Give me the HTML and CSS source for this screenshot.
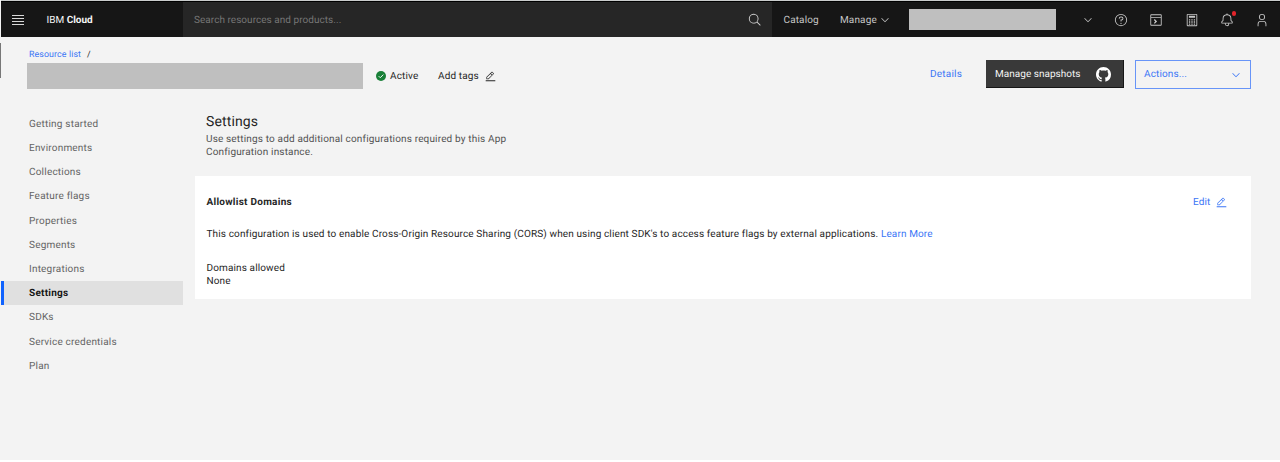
FILE: index.html
```html
<!DOCTYPE html>
<html lang="en">
<head>
<meta charset="utf-8">
<title>Settings - IBM Cloud</title>
<link rel="stylesheet" href="styles.css">
</head>
<body>
<svg class="defs" width="0" height="0">
  <symbol id="chevron" viewBox="0 0 16 16"><path d="M8 11L3 6 3.7 5.3 8 9.6 12.3 5.3 13 6z"/></symbol>
  <symbol id="edit" viewBox="0 0 32 32"><path d="M2 27H30V30H2zM25.4 9c.8-.8.8-2 0-2.8l-3.6-3.6c-.8-.8-2-.8-2.8 0l-15 15V24h6.4L25.4 9zM20.4 4L24 7.6l-3 3L17.4 7 20.4 4zM6 22v-3.6l10-10 3.6 3.6-10 10H6z"/></symbol>
</svg>
<header class="header">
  <div class="brand">
    <span class="burger"><i></i><i></i><i></i><i></i></span>
    <span class="brand-name">IBM <b>Cloud</b></span>
  </div>
  <div class="search">
    <span class="search-text">Search resources and products...</span>
    <svg class="search-icon" viewBox="0 0 32 32"><path d="M29,27.5859l-7.5521-7.5521a11.0177,11.0177,0,1,0-1.4141,1.4141L27.5859,29ZM4,13a9,9,0,1,1,9,9A9.01,9.01,0,0,1,4,13Z"/></svg>
  </div>
  <span class="catalog">Catalog</span>
  <span class="manage">Manage</span>
  <svg class="chev"><use href="#chevron"/></svg>
  <span class="account"></span>
  <div class="tools">
    <svg class="chev"><use href="#chevron"/></svg>
    <svg class="tool" viewBox="0 0 32 32"><path d="M16,2A14,14,0,1,0,30,16,14,14,0,0,0,16,2Zm0,26A12,12,0,1,1,28,16,12,12,0,0,1,16,28Z"/><circle cx="16" cy="23.5" r="1.5"/><path d="M17,8H15.5A4.49,4.49,0,0,0,11,12.5V13h2v-.5A2.5,2.5,0,0,1,15.5,10H17a2.5,2.5,0,0,1,0,5H15v4.5h2V17a4.5,4.5,0,0,0,0-9Z"/></svg>
    <svg class="tool" viewBox="0 0 32 32"><path d="M27 3H5a2 2 0 0 0-2 2v22a2 2 0 0 0 2 2h22a2 2 0 0 0 2-2V5a2 2 0 0 0-2-2zm0 2v4H5V5zM5 27V11h22v16z"/><path d="M11.200 22.600l3-3.400-3-3.400 2-2 5.300 5.400-5.300 5.400z"/></svg>
    <svg class="tool" viewBox="0 0 32 32"><path d="M26 4v24H6V4h20m0-2H6a2 2 0 0 0-2 2v24a2 2 0 0 0 2 2h20a2 2 0 0 0 2-2V4a2 2 0 0 0-2-2z"/><path d="M9 6h14v5H9zM9 14h3v3H9zM14.500 14h3v3h-3zM20 14h3v3h-3zM9 19h3v3H9zM14.500 19h3v3h-3zM20 19h3v3h-3zM9 24h3v3H9zM14.500 24h3v3h-3zM20 24h3v3h-3z"/></svg>
    <span class="bell"><svg class="tool" viewBox="0 0 32 32"><path d="M28.7071,19.293,26,16.5859V13a10.0136,10.0136,0,0,0-9-9.9492V1H15V3.0508A10.0136,10.0136,0,0,0,6,13v3.5859L3.2929,19.293A1,1,0,0,0,3,20v3a1,1,0,0,0,1,1h7v.7768a5.152,5.152,0,0,0,4.5,5.1987A5.0057,5.0057,0,0,0,21,25V24h7a1,1,0,0,0,1-1V20A1,1,0,0,0,28.7071,19.293ZM19,25a3,3,0,0,1-6,0V24h6Zm8-3H5V20.4141L7.707,17.707A1,1,0,0,0,8,17V13a8,8,0,0,1,16,0v4a1,1,0,0,0,.293.707L27,20.4141Z"/></svg><i class="dot"></i></span>
    <svg class="tool" viewBox="0 0 32 32"><path d="M16 4a5 5 0 1 1-5 5 5 5 0 0 1 5-5m0-2a7 7 0 1 0 7 7A7 7 0 0 0 16 2zM26 30H24V25a5 5 0 0 0-5-5H13a5 5 0 0 0-5 5v5H6V25a7 7 0 0 1 7-7h6a7 7 0 0 1 7 7z"/></svg>
  </div>
</header>
<section class="titlebar">
  <div class="title-left">
    <div class="crumbs"><a>Resource list</a><span>/</span></div>
    <div class="title-row">
      <span class="name"></span>
      <svg class="check" viewBox="0 0 16 16"><circle cx="8" cy="8" r="8" fill="#198038"/><path d="M4.300 8.200l2.500 2.500 4.900-4.900" fill="none" stroke="#fff" stroke-width="1.500"/></svg>
      <span class="active-label">Active</span>
      <span class="tags-label">Add tags</span>
      <svg class="edit"><use href="#edit"/></svg>
    </div>
  </div>
  <div class="title-right">
    <a class="details">Details</a>
    <div class="snapshots"><span>Manage snapshots</span>
      <svg class="github" viewBox="0 0 16 16"><path d="M8 0C3.580 0 0 3.580 0 8c0 3.540 2.290 6.530 5.470 7.590.4.070.55-.17.55-.38 0-.19-.01-.82-.01-1.490-2.010.37-2.530-.49-2.690-.94-.09-.23-.48-.94-.82-1.130-.28-.15-.68-.52-.01-.53.63-.01 1.080.58 1.230.82.72 1.210 1.870.87 2.330.66.07-.52.28-.87.51-1.070-1.780-.2-3.640-.89-3.640-3.950 0-.87.31-1.590.82-2.150-.08-.2-.36-1.020.08-2.120 0 0 .67-.21 2.200.82.64-.18 1.320-.27 2-.27s1.360.09 2 .27c1.530-1.040 2.200-.82 2.200-.82.44 1.100.16 1.920.08 2.120.51.56.82 1.270.82 2.150 0 3.070-1.870 3.750-3.650 3.950.29.25.54.73.54 1.480 0 1.070-.01 1.930-.01 2.200 0 .21.15.46.55.38A8.010 8.010 0 0 0 16 8c0-4.420-3.580-8-8-8z"/></svg>
    </div>
    <div class="actions"><span>Actions...</span><svg class="chev"><use href="#chevron"/></svg></div>
  </div>
</section>
<div class="body">
  <nav class="nav">
    <a>Getting started</a>
    <a>Environments</a>
    <a>Collections</a>
    <a>Feature flags</a>
    <a>Properties</a>
    <a>Segments</a>
    <a>Integrations</a>
    <a class="selected">Settings</a>
    <a>SDKs</a>
    <a>Service credentials</a>
    <a>Plan</a>
  </nav>
  <main class="main">
    <h1>Settings</h1>
    <p class="intro">Use settings to add additional configurations required by this App<br>Configuration instance.</p>
    <section class="card">
      <div class="card-head"><h2>Allowlist Domains</h2><a class="edit-link"><span>Edit</span><svg class="edit"><use href="#edit"/></svg></a></div>
      <p class="desc"><span>This configuration is used to enable Cross-Origin Resource Sharing (CORS) when using client SDK's to access feature flags by external applications.</span> <a>Learn More</a></p>
      <p class="domains">Domains allowed<br>None</p>
    </section>
  </main>
</div>
</body>
</html>
```
FILE: styles.css
```css
* { box-sizing: border-box; }
body {
  margin: 0;
  width: 1280px;
  height: 462px;
  overflow: hidden;
  background: #f3f3f3;
  border-bottom: 2px solid #fff;
  font-family: Roboto, "Liberation Sans", sans-serif;
  font-size: 10px;
  letter-spacing: 0.13px;
  text-rendering: geometricPrecision;
  color: #262626;
  white-space: nowrap;
}
svg { display: block; flex: none; fill: currentColor; }
.defs { display: none; }
a { color: #3b76f6; }
p, h1, h2 { margin: 0; }
.header {
  display: flex;
  align-items: center;
  height: 37px;
  margin-left: 1px;
  border-top: 1px solid #c9cccc;
  background: #161616;
  box-shadow: inset 0 1px #000;
  padding-top: 1px;
  color: #c6c6c6;
}
.brand { display: flex; flex: none; align-items: center; width: 182px; padding-left: 11px; color: #f4f4f4; }
.burger { display: flex; flex-direction: column; gap: 2px; width: 12px; margin-right: 22.500px; }
.burger i { height: 1px; background: #d8d8d8; }
.brand-name { padding-top: 1px; letter-spacing: 0; }
.search { display: flex; flex: none; align-items: center; justify-content: space-between; width: 589px; height: 35px; padding: 0 10px 0 11px; background: #262626; color: #757575; }
.search-text { padding-top: 1px; letter-spacing: 0.04px; }
.search-icon { width: 14px; height: 14px; color: #d0d0d0; }
.catalog { flex: none; width: 68px; padding: 1px 0 0 11.500px; }
.manage { flex: none; width: 39px; padding-top: 1px; }
.chev { width: 12px; height: 12px; }
.account { flex: none; width: 147px; height: 21px; margin-left: 18px; background: #bfbfbf; }
.tools { display: flex; align-items: center; margin-left: 26px; gap: 21.200px; }
.tools .chev { margin-right: -1px; }
.tool { width: 14px; height: 14px; }
.bell { position: relative; }
.dot { position: absolute; left: 12px; top: -1.500px; width: 4.500px; height: 4.500px; border-radius: 50%; background: #e3242b; }
.titlebar { display: flex; justify-content: space-between; height: 70px; }
.title-left { padding-left: 27px; }
.title-left::before { content: ""; position: absolute; left: 0; top: 43px; width: 1px; height: 35px; background: #777; }
.crumbs { display: flex; gap: 6px; padding: 12px 0 0 2px; height: 26px; font-size: 8.800px; line-height: 13px; letter-spacing: 0.12px; }
.title-row { display: flex; align-items: center; height: 26px; }
.name { width: 336px; height: 26px; background: #bfbfbf; }
.check { width: 10px; height: 10px; margin: 0 4px 0 13px; }
.active-label { width: 48px; }
.tags-label { width: 47px; }
.edit { width: 11px; height: 11px; }
.title-right { display: flex; padding: 23px 29px 0 0; line-height: 28px; }
.details { width: 56px; padding-top: 1px; letter-spacing: 0.2px; }
.snapshots { display: flex; align-items: center; justify-content: space-between; width: 138px; height: 28px; padding: 0 13px 0 9px; background: #393939; color: #f4f4f4; box-shadow: inset -1px -1px #161616; letter-spacing: 0.03px; }
.snapshots span { padding-top: 1px; }
.github { width: 15px; height: 15px; color: #fff; }
.actions { display: flex; align-items: center; justify-content: space-between; width: 116px; height: 29px; margin-left: 11px; padding: 0 8px; border: 1px solid #6794f8; color: #3b76f6; }
.actions span { padding-top: 1px; }
.body { display: flex; }
.nav { display: flex; flex-direction: column; width: 182.400px; padding-top: 4.300px; margin-left: 1px; letter-spacing: 0.2px; }
.nav a { height: 24.220px; line-height: 24.220px; padding: 1.400px 0 0 28px; color: #646464; }
.nav .selected { padding-left: 25px; border-left: 3px solid #0f62fe; background: #e0e0e0; color: #161616; font-weight: 700; letter-spacing: 0.25px; }
.main { width: 1056px; margin-left: 11.600px; }
h1 { height: 26px; padding: 6px 0 0 11px; font-size: 14px; font-weight: 400; line-height: 18px; }
.intro { padding-left: 11px; line-height: 13px; height: 43px; color: #525252; letter-spacing: 0.16px; }
.card { height: 123px; padding: 20px 23.500px 0 11.500px; background: #fff; }
.card-head { display: flex; justify-content: space-between; line-height: 13px; }
h2 { font-size: 10px; font-weight: 700; letter-spacing: 0.27px; }
.edit-link { display: flex; align-items: center; gap: 6px; }
.edit-link .edit { margin-top: -1px; }
.desc { padding-top: 19px; line-height: 13px; }
.domains { padding-top: 21px; line-height: 13px; }
```
